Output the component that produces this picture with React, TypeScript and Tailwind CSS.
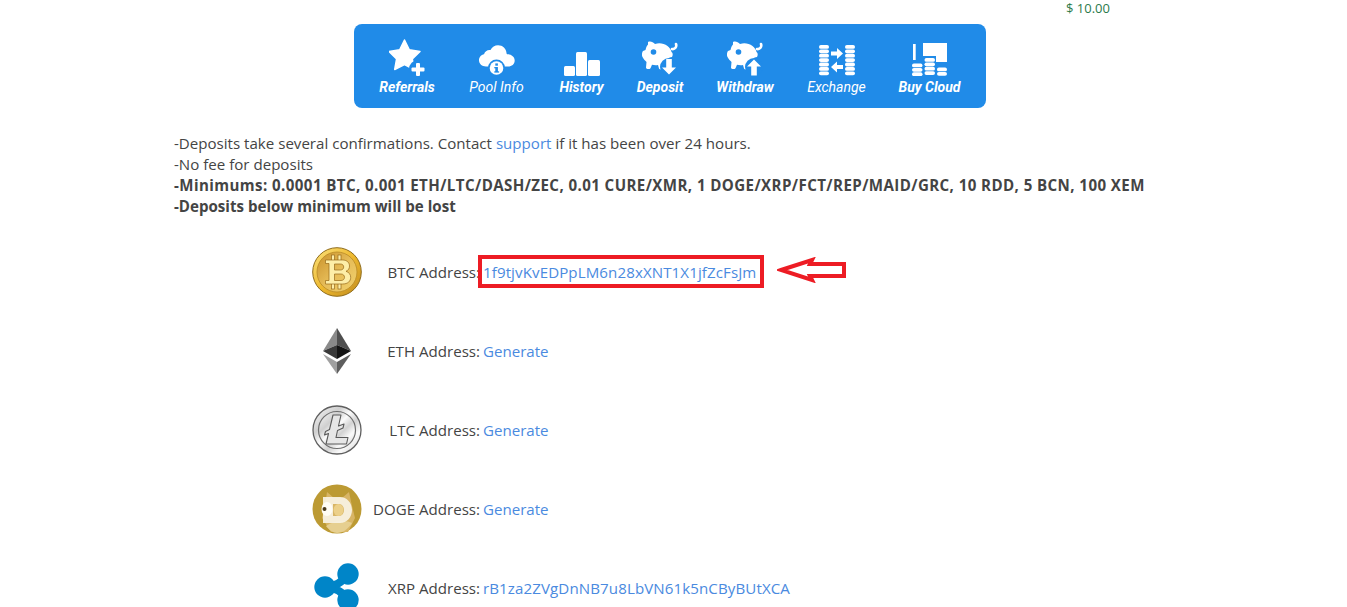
import type { ReactNode } from "react";

function Coins({ x, y, n, w = 10 }: { x: number; y: number; n: number; w?: number }) {
  return (
    <g fill="#fff">
      {Array.from({ length: n }).map((_, i) => (
        <rect key={i} x={x} y={y + i * 4.4} width={w} height={3.8} rx={1.9} />
      ))}
    </g>
  );
}

function Piggy({ up }: { up?: boolean }) {
  return (
    <svg width="36" height="35" viewBox="0 0 36 35" fill="#fff">
      <path d="M6 1c2.500-1 5 0 7 2 4.500-1.500 9-.5 12.500 2 2 1.500 3.500 3.500 4 6 1.500 1 1.500 3.500 .5 5l-2.500 .5c-1 2-2.500 4-5 5l-1 6c-.3 1.500-4 1.500-4.500 0l-1-3.500c-2 .3-4 .2-6-.3l-1.500 3.500c-1 1.500-4.500 1-4.500-.7l.5-5.500C3.500 20 1.500 18 .5 16c-1-1.500-.5-5 .5-6l2.500-1C4 7 4.500 5 6 3.500z" />
      <path d="M30 8c3 .5 5-2 4-5" fill="none" stroke="#fff" strokeWidth="2.600" strokeLinecap="round" />
      <circle cx="11.500" cy="11" r="2.800" fill="#208be8" />
      <circle cx="27" cy="26" r="9" fill="#208be8" />
      {up ? (
        <path d="M27 18.500l7 7h-4.200V34.500h-5.600V25.500H20z" />
      ) : (
        <path d="M24.200 18h5.600V26.500H34l-7 7-7-7h4.200z" />
      )}
    </svg>
  );
}

function StarIcon() {
  return (
    <svg width="36" height="37" viewBox="0 0 36 37" fill="#fff">
      <path d="M15.500 1l4.800 9.800 10.700 1.600-7.700 7.500 1.800 10.600-9.600-5-9.800 5 1.900-10.600L0 12.400l10.700-1.600z" stroke="#fff" strokeWidth="1.500" strokeLinejoin="round" />
      <circle cx="29" cy="30" r="9" fill="#208be8" />
      <rect x="27" y="24" width="4" height="13" rx="1" />
      <rect x="22.500" y="28.500" width="13" height="4" rx="1" />
    </svg>
  );
}

function CloudIcon() {
  return (
    <svg width="37" height="32" viewBox="0 0 37 32" fill="#fff">
      <path d="M8 22.500c-4 0-7-2.700-7-6.200 0-3 2.200-5.500 5-6 .8-3 3.500-4.800 6.500-4.300C14 3 16.800 1.200 20 1.200c4.700 0 8.300 3.400 8.500 7.800 .2 .8 .2 1 .5 1.300 4-.2 7.700 2.400 7.700 6.200 0 3.700-3 6-6.500 6z" />
      <circle cx="18.500" cy="24" r="8.500" fill="#208be8" />
      <circle cx="18.500" cy="24" r="6.800" />
      <rect x="17.300" y="23" width="2.600" height="5" fill="#208be8" />
      <rect x="16.300" y="23" width="2" height="1.300" fill="#208be8" />
      <rect x="16.300" y="27.300" width="4.800" height="1.300" fill="#208be8" />
      <rect x="17.300" y="19.400" width="2.600" height="2.300" fill="#208be8" />
    </svg>
  );
}

function BarsIcon() {
  return (
    <svg width="36" height="24" viewBox="0 0 36 24" fill="#fff">
      <rect x="0" y="14" width="11" height="10" rx="1.500" />
      <rect x="12" y="0" width="11" height="24" rx="1.500" />
      <rect x="24" y="8" width="12" height="16" rx="1.500" />
    </svg>
  );
}

function ExchangeIcon() {
  return (
    <svg width="36" height="31" viewBox="0 0 36 31" fill="#fff">
      <Coins x={0} y={0} n={7} />
      <Coins x={26} y={0} n={7} />
      <path d="M12 6.500h6V3l6 5.500-6 5.500v-3.500h-6z" />
      <path d="M24 20h-6v-3.500L12 22l6 5.500V24h6z" />
    </svg>
  );
}

function BuyCloudIcon() {
  return (
    <svg width="35" height="33" viewBox="0 0 35 33" fill="#fff">
      <rect x="1" y="1" width="2.700" height="16" />
      <rect x="11" y="0" width="24" height="20" />
      <path d="M11 13h13v20H11z" fill="#208be8" />
      <path d="M24 19h11v5H24z" fill="#208be8" />
      <Coins x={0} y={20.500} n={3} w={10.500} />
      <Coins x={12.500} y={15} n={4} w={10.500} />
      <Coins x={25} y={24.500} n={2} w={10} />
    </svg>
  );
}

function MenuItem({ icon, label, light, w }: { icon: ReactNode; label: string; light?: boolean; w: string }) {
  return (
    <a className={`flex flex-col items-center ${w}`}>
      <span className="flex h-[38px] items-end">{icon}</span>
      <span
        className={`mt-[1px] text-[14px] leading-[20px] text-white italic ${light ? "font-normal" : "font-bold"}`}
        style={{ fontFamily: "Roboto, sans-serif" }}
      >
        {label}
      </span>
    </a>
  );
}

function BtcLogo() {
  return (
    <svg width="50" height="50" viewBox="0 0 50 50">
      <defs>
        <linearGradient id="btcRim" x1="0" y1="0" x2="1" y2="1">
          <stop offset="0" stopColor="#fbe27e" />
          <stop offset="0.5" stopColor="#eeb92f" />
          <stop offset="1" stopColor="#c08a1c" />
        </linearGradient>
        <linearGradient id="btcFace" x1="0" y1="0" x2="1" y2="1">
          <stop offset="0" stopColor="#c9912a" />
          <stop offset="0.5" stopColor="#e6bc58" />
          <stop offset="1" stopColor="#f2d26e" />
        </linearGradient>
      </defs>
      <circle cx="25" cy="25" r="24.300" fill="url(#btcRim)" stroke="#8f6c1c" strokeWidth="1" />
      <circle cx="25" cy="25" r="20" fill="url(#btcFace)" stroke="#b98a26" strokeWidth="0.800" />
      <g fill="#fdeea8" stroke="#96691a" strokeWidth="0.700">
        <rect x="19.500" y="8" width="3" height="6" />
        <rect x="26" y="8" width="3" height="6" />
        <rect x="19.500" y="36" width="3" height="6" />
        <rect x="26" y="36" width="3" height="6" />
        <path fillRule="evenodd" d="M13.500 13h17c4.500 0 7 2.700 7 6 0 2.500-1.200 4.300-3.500 5.300 3 1 4.700 3.200 4.700 6 0 4-3 6.700-8 6.700h-17.200v-3.500h3.500V16.500h-3.500zM22.500 17v6h6c2 0 3.200-1.300 3.200-3s-1.200-3-3.200-3zM22.500 27v6.500h6.500c2.200 0 3.500-1.400 3.500-3.200s-1.300-3.300-3.500-3.300z" />
      </g>
    </svg>
  );
}

function EthLogo() {
  return (
    <svg width="30" height="46" viewBox="0 0 30 46">
      <polygon points="15,0 15,17 1,23" fill="#8a8a8a" />
      <polygon points="15,0 29,23 15,17" fill="#4f4f4f" />
      <polygon points="15,17 1,23 15,31" fill="#3a3a3a" />
      <polygon points="15,17 29,23 15,31" fill="#141414" />
      <polygon points="1,26 15,34 15,46" fill="#a0a0a0" />
      <polygon points="29,26 15,34 15,46" fill="#5e5e5e" />
    </svg>
  );
}

function LtcLogo() {
  return (
    <svg width="50" height="50" viewBox="0 0 50 50">
      <defs>
        <linearGradient id="ltcFace" x1="0" y1="0" x2="1" y2="1">
          <stop offset="0" stopColor="#fafafa" />
          <stop offset="0.3" stopColor="#cfcfcf" />
          <stop offset="0.45" stopColor="#fbfbfb" />
          <stop offset="0.6" stopColor="#d2d2d2" />
          <stop offset="0.75" stopColor="#fafafa" />
          <stop offset="1" stopColor="#cccccc" />
        </linearGradient>
      </defs>
      <circle cx="25" cy="25" r="24" fill="url(#ltcFace)" stroke="#5f5f5f" strokeWidth="1.300" />
      <circle cx="25" cy="25" r="18.500" fill="url(#ltcFace)" stroke="#6f6f6f" strokeWidth="1.200" />
      <polygon
        points="21,10 29,10 26.500,21 32,19 31,23 25.500,25.500 24,32.500 36,32.500 34.500,39 14,39 16.500,28.500 12.500,30 13.500,26.500 17.500,24.500"
        fill="#e6e6e6"
        stroke="#5a5a5a"
        strokeWidth="1.100"
        strokeLinejoin="round"
      />
    </svg>
  );
}

function DogeLogo() {
  return (
    <svg width="50" height="50" viewBox="0 0 50 50">
      <circle cx="25" cy="25" r="24.500" fill="#bc9a33" />
      <path d="M13 22l2-14 7 6h8l7-6 3 14 3 12-7 14H19l-9-14z" fill="#d8b565" />
      <path d="M14 42c8-6 21-6 26-3-4 6-9 10-15 10-4 0-8-3-11-7z" fill="#e6cf90" />
      <path fillRule="evenodd" d="M11 13h17c7 0 12 6 12 13s-5 13-12 13H11zM21 20v12h6c3 0 5-3 5-6s-2-6-5-6z" fill="#f8f3e4" fillOpacity="0.92" />
      <ellipse cx="15" cy="25" rx="5.500" ry="7" fill="#fffdf5" />
      <circle cx="12.500" cy="25" r="2" fill="#4a3a1c" />
      <ellipse cx="26.500" cy="26" rx="5" ry="6" fill="#ecd089" />
    </svg>
  );
}

function XrpLogo() {
  return (
    <svg width="50" height="50" viewBox="0 0 50 50" fill="#0085c8">
      <path d="M13 24Q27 24 36 11M13 24Q27 24 36 37" fill="none" stroke="#0085c8" strokeWidth="8" />
      <circle cx="36" cy="11" r="10.700" />
      <circle cx="13" cy="24" r="10.700" />
      <circle cx="36" cy="37" r="10.700" />
    </svg>
  );
}

function AddressRow({ logo, label, children }: { logo: ReactNode; label: string; children: ReactNode }) {
  return (
    <div className="flex h-[79px] shrink-0 items-center">
      <div className="flex w-[50px] justify-center">{logo}</div>
      <div className="w-[118px] pt-[2px] text-right">{label}:</div>
      <div className="ml-[3px] pt-[2px]">{children}</div>
    </div>
  );
}

export default function App() {
  return (
    <div
      className="h-[607px] w-[1347px] overflow-hidden bg-white text-[15.100px] leading-[21px] text-[#444]"
      style={{ fontFamily: '"Open Sans", "Noto Sans", sans-serif' }}
    >
      <div className="h-[24px] pl-[1066px] text-[13px] leading-[16px] text-[#2b7a4b]">$ 10.00</div>

      <nav className="ml-[354px] flex h-[84px] w-[632px] items-start rounded-[8px] bg-[#208be8] pl-[6px] pt-[14px]">
        <MenuItem w="w-[94px]" icon={<StarIcon />} label="Referrals" />
        <MenuItem w="w-[85px]" icon={<CloudIcon />} label="Pool Info" light />
        <MenuItem w="w-[85px]" icon={<BarsIcon />} label="History" />
        <MenuItem w="w-[72px]" icon={<Piggy />} label="Deposit" />
        <MenuItem w="w-[98px]" icon={<Piggy up />} label="Withdraw" />
        <MenuItem w="w-[85px]" icon={<ExchangeIcon />} label="Exchange" light />
        <MenuItem w="w-[101px]" icon={<BuyCloudIcon />} label="Buy Cloud" />
      </nav>

      <div className="ml-[174px] mt-[25px]">
        <p>
          -Deposits take several confirmations. Contact <a className="text-[#4a8ae0]">support</a> if it has been over 24
          hours.
        </p>
        <p>-No fee for deposits</p>
        <p className="font-bold tracking-[0.41px]">
          -Minimums: 0.0001 BTC, 0.001 ETH/LTC/DASH/ZEC, 0.01 CURE/XMR, 1 DOGE/XRP/FCT/REP/MAID/GRC, 10 RDD, 5 BCN, 100 XEM
        </p>
        <p className="font-bold">-Deposits below minimum will be lost</p>
      </div>

      <div className="ml-[312px] mt-[15px] flex flex-col">
        <AddressRow logo={<BtcLogo />} label="BTC Address">
          <span className="relative block tracking-[0.1px] text-[#4a8ae0]">
            1f9tjvKvEDPpLM6n28xXNT1X1jfZcFsJm
            <span className="absolute -left-[5px] -top-[7px] h-[33px] w-[286px] border-4 border-[#ed1c24]" />
            <svg className="absolute -top-[5px] left-[294px]" width="70" height="26" viewBox="0 0 70 26">
              <polygon
                points="4,13 35,3 33,7 67,7 67,19 33,19 35,23"
                fill="#fff"
                stroke="#ed1c24"
                strokeWidth="4"
              />
            </svg>
          </span>
        </AddressRow>
        <AddressRow logo={<EthLogo />} label="ETH Address">
          <a className="text-[#4a8ae0]">Generate</a>
        </AddressRow>
        <AddressRow logo={<LtcLogo />} label="LTC Address">
          <a className="text-[#4a8ae0]">Generate</a>
        </AddressRow>
        <AddressRow logo={<DogeLogo />} label="DOGE Address">
          <a className="text-[#4a8ae0]">Generate</a>
        </AddressRow>
        <AddressRow logo={<XrpLogo />} label="XRP Address">
          <a className="tracking-[0.1px] text-[#4a8ae0]">rB1za2ZVgDnNB7u8LbVN61k5nCByBUtXCA</a>
        </AddressRow>
      </div>
    </div>
  );
}
